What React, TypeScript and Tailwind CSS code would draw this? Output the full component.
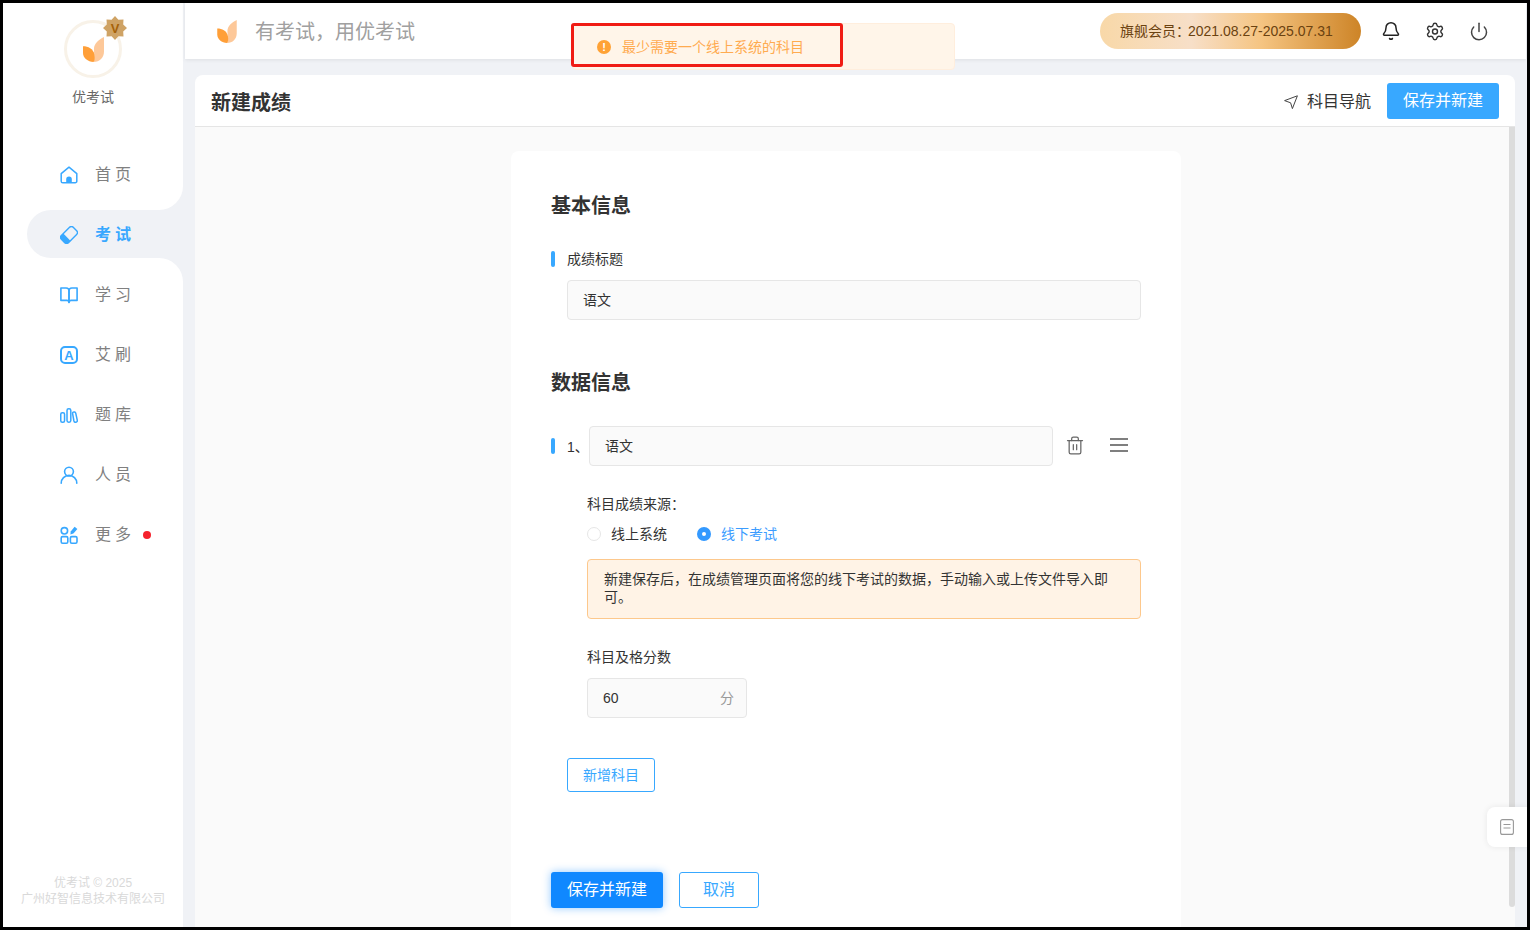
import React from "react";
import { Bell, Settings, Power, Trash2 } from "lucide-react";

function Logo({ className }: { className: string }) {
  return (
    <svg viewBox="0 0 22 26" className={className}>
      <path d="M22 0V15C22 21.5 17.5 26 11 26C13 22 11.5 18 11.5 12.5C11.5 7 16.5 2.5 22 0Z" fill="#fdc899" />
      <path d="M0 9.5C5.5 9.5 10.5 12 12 18C12.7 22 12.3 25 11 26C5 26 0 22 0 16.5Z" fill="#ff9f38" />
    </svg>
  );
}

function HomeIcon() {
  return (
    <svg viewBox="0 0 18 18" className="w-[18px] h-[18px]" fill="none" stroke="#38a8ff" strokeWidth="1.5">
      <path d="M1.2 7.6L9 1.2l7.8 6.4v7.6a1.6 1.6 0 0 1-1.6 1.6H2.8a1.6 1.6 0 0 1-1.6-1.6z" strokeLinejoin="round" />
      <path d="M6.2 16.8v-3.4a2.8 2.8 0 0 1 5.6 0v3.4z" fill="#38a8ff" stroke="none" />
    </svg>
  );
}
function EraserIcon() {
  return (
    <svg viewBox="0 0 18 18" className="w-[18px] h-[18px]" fill="none" stroke="#38a8ff" strokeWidth="1.4">
      <g transform="rotate(-45 9 9)">
        <rect x="0.6" y="4" width="16.8" height="10" rx="2.6" />
        <path d="M3.2 4H6V14H3.2A2.6 2.6 0 0 1 0.6 11.4V6.6A2.6 2.6 0 0 1 3.2 4Z" fill="#38a8ff" stroke="none" />
      </g>
    </svg>
  );
}
function BookIcon() {
  return (
    <svg viewBox="0 0 18 18" className="w-[18px] h-[18px]" fill="none" stroke="#38a8ff" strokeWidth="1.6" strokeLinejoin="round">
      <path d="M0.9 2H6.2A2.8 2.8 0 0 1 9 4.8V16.4A2.2 2.2 0 0 0 6.8 14.4H0.9Z" />
      <path d="M17.1 2H11.8A2.8 2.8 0 0 0 9 4.8V16.4A2.2 2.2 0 0 1 11.2 14.4H17.1Z" />
    </svg>
  );
}
function ABadge() {
  return (
    <div className="w-[18px] h-[18px] rounded-[5px] border-2 border-[#38a8ff] flex items-center justify-center text-[#38a8ff] text-[13px] font-bold leading-none">A</div>
  );
}
function BarsIcon() {
  return (
    <svg viewBox="0 0 19 16" className="w-[19px] h-[17px]" fill="none" stroke="#38a8ff" strokeWidth="1.6">
      <rect x="0.8" y="5" width="4" height="10.2" rx="1.6" />
      <rect x="7.4" y="0.8" width="4" height="14.4" rx="1.8" />
      <path d="M14 4.5a1.7 1.7 0 0 1 2.6 1l1.6 7.4a1.8 1.8 0 0 1-3.5.9L13.3 6a1.7 1.7 0 0 1 .7-1.5z" />
    </svg>
  );
}
function UserIcon() {
  return (
    <svg viewBox="0 0 18 18" className="w-[18px] h-[18px]" fill="none" stroke="#38a8ff" strokeWidth="1.6" strokeLinecap="round">
      <circle cx="9" cy="5.6" r="4.4" />
      <path d="M1.2 17.2a7.8 7.8 0 0 1 15.6 0" />
    </svg>
  );
}
function MoreIcon() {
  return (
    <svg viewBox="0 0 18 18" className="w-[18px] h-[18px]" fill="none" stroke="#38a8ff" strokeWidth="1.6">
      <circle cx="4.4" cy="4.8" r="3.2" />
      <rect x="1.2" y="10.6" width="6.6" height="6.6" rx="1.4" />
      <rect x="10.4" y="10.6" width="6.6" height="6.6" rx="1.4" />
      <path d="M14.6 0.8l2.8 2.2-4 4.6-3 .8.3-3z" fill="#38a8ff" stroke="none" />
    </svg>
  );
}

function NavRow({ icon, label, extra }: { icon: React.ReactNode; label: string; extra?: React.ReactNode }) {
  return (
    <div className="h-[60px] pl-[57px] flex items-center">
      <div className="w-[18px] flex justify-center items-center">{icon}</div>
      <span className="ml-[17px] text-[16px] tracking-[4px] text-[#808080]">{label}</span>
      {extra}
    </div>
  );
}

function Sidebar() {
  return (
    <div className="w-[180px] shrink-0 flex flex-col bg-[#f0f2f6]">
      <div className="bg-white rounded-br-[24px] pb-[5px]">
        <div className="pt-[17px] flex flex-col items-center h-[142px]">
          <div className="relative w-[58px] h-[58px] rounded-full border-[3px] border-[#f8f2e8] flex items-center justify-center">
            <Logo className="w-[21px] h-[25px]" />
            <div className="absolute -right-[8px] -top-[7px] w-[24px] h-[24px] flex items-center justify-center">
              <svg viewBox="0 0 24 24" className="absolute inset-0 w-full h-full">
                <polygon points="12,0 15.4,3.8 20.5,3.5 20.2,8.6 24,12 20.2,15.4 20.5,20.5 15.4,20.2 12,24 8.6,20.2 3.5,20.5 3.8,15.4 0,12 3.8,8.6 3.5,3.5 8.6,3.8" fill="#cfa365" />
              </svg>
              <span className="relative text-[13px] font-bold leading-none text-[#a5620a]">V</span>
            </div>
          </div>
          <div className="mt-[9px] text-[14px] leading-[20px] text-[#666666]">优考试</div>
        </div>
        <NavRow icon={<HomeIcon />} label="首页" />
      </div>
      <div className="bg-white h-[48px] pl-[24px]">
        <div className="h-full bg-[#f0f2f6] rounded-l-[24px] pl-[33px] pt-[2px] flex items-center">
          <div className="w-[18px] flex justify-center"><EraserIcon /></div>
          <span className="ml-[17px] text-[16px] tracking-[4px] font-bold text-[#38a8ff]">考试</span>
        </div>
      </div>
      <div className="flex-1 bg-white rounded-tr-[24px] pt-[7px] flex flex-col">
        <NavRow icon={<BookIcon />} label="学习" />
        <NavRow icon={<ABadge />} label="艾刷" />
        <NavRow icon={<BarsIcon />} label="题库" />
        <NavRow icon={<UserIcon />} label="人员" />
        <NavRow icon={<MoreIcon />} label="更多" extra={<span className="ml-[8px] w-[8px] h-[8px] rounded-full bg-[#f5222d]" />} />
        <div className="mt-auto pb-[20px] text-center text-[12px] leading-[16px] text-[#d9d9d9]">
          <div>优考试 © 2025</div>
          <div>广州好智信息技术有限公司</div>
        </div>
      </div>
    </div>
  );
}

function TopBar() {
  return (
    <div className="h-[56px] shrink-0 ml-[2px] mr-[1px] bg-white shadow-[0_1px_4px_rgba(0,0,0,0.08)] flex items-center pl-[32px] pr-[37px] relative">
      <Logo className="w-[20px] h-[23px] mt-[1px]" />
      <span className="ml-[18px] mt-[2px] text-[20px] text-[#a0a0a0]">有考试，用优考试</span>
      <div className="ml-auto w-[261px] h-[36px] rounded-full pl-[20px] flex items-center text-[14px] text-[#6b4210] bg-[linear-gradient(90deg,#f8d8a8_0%,#f7dfc8_35%,#f5c481_62%,#cd8427_100%)]">
        <span>旗舰会员：</span>
        <span className="-ml-[2px]">2021.08.27-2025.07.31</span>
      </div>
      <div className="ml-[20px] w-[20px] flex justify-center"><Bell size={20} color="#222222" strokeWidth={1.8} /></div>
      <div className="ml-[24px] w-[20px] flex justify-center"><Settings size={21} color="#333333" strokeWidth={1.7} /></div>
      <div className="ml-[24px] w-[20px] flex justify-center"><Power size={21} color="#444444" strokeWidth={1.8} /></div>
    </div>
  );
}

function Bar() {
  return <span className="w-[4px] h-[16px] rounded-[2px] bg-[#38a8ff] shrink-0" />;
}

function TextBox({ value, className, suffix }: { value: string; className: string; suffix?: string }) {
  return (
    <div className={`h-[40px] px-[15px] flex items-center justify-between rounded-[4px] border border-[#e6e6e6] bg-[#fafafa] text-[14px] text-[#333333] ${className}`}>
      <span>{value}</span>
      {suffix ? <span className="text-[#999999] -mr-[3px]">{suffix}</span> : null}
    </div>
  );
}

function Form() {
  return (
    <div className="w-[670px] rounded-t-[8px] bg-white px-[40px] pt-[40px] pb-[40px] text-[#333333]">
      <div className="h-[28px] leading-[30px] text-[20px] font-bold">基本信息</div>
      <div className="mt-[30px] h-[20px] flex items-center">
        <Bar />
        <span className="ml-[12px] text-[14px]">成绩标题</span>
      </div>
      <TextBox value="语文" className="mt-[11px] ml-[16px] w-[574px]" />
      <div className="mt-[48px] h-[28px] leading-[30px] text-[20px] font-bold">数据信息</div>
      <div className="mt-[30px] h-[40px] flex items-center">
        <Bar />
        <span className="ml-[12px] w-[22px] text-[14px] pt-[3px]">1、</span>
        <TextBox value="语文" className="w-[464px]" />
        <div className="ml-[12px] w-[20px] flex justify-center -mt-[2px]"><Trash2 size={21} color="#666666" strokeWidth={1.5} /></div>
        <svg viewBox="0 0 18 14" className="ml-[25px] w-[18px] h-[14px] -mt-[2px]" stroke="#555555" strokeWidth="1.6">
          <path d="M0 1h18M0 7h18M0 13h18" />
        </svg>
      </div>
      <div className="ml-[36px]">
        <div className="mt-[28px] h-[20px] leading-[20px] text-[14px]">科目成绩来源：</div>
        <div className="mt-[10px] h-[20px] flex items-center text-[14px]">
          <span className="w-[14px] h-[14px] rounded-full border border-[#e6e6e6] bg-white" />
          <span className="ml-[10px]">线上系统</span>
          <span className="ml-[30px] w-[14px] h-[14px] rounded-full bg-[#3399ff] flex items-center justify-center">
            <span className="w-[4px] h-[4px] rounded-full bg-white" />
          </span>
          <span className="ml-[10px] text-[#3b9cff]">线下考试</span>
        </div>
        <div className="mt-[15px] w-[554px] h-[60px] rounded-[4px] border border-[#fdc88c] bg-[#fff3e6] px-[16px] pt-[10px] text-[14px] leading-[18px]">
          新建保存后，在成绩管理页面将您的线下考试的数据，手动输入或上传文件导入即可。
        </div>
        <div className="mt-[28px] h-[20px] leading-[20px] text-[14px]">科目及格分数</div>
        <TextBox value="60" suffix="分" className="mt-[11px] w-[160px]" />
      </div>
      <div className="mt-[40px] ml-[16px] w-[88px] h-[34px] rounded-[3px] border border-[#38a8ff] bg-white flex items-center justify-center text-[14px] text-[#38a8ff]">新增科目</div>
      <div className="mt-[80px] flex gap-[16px]">
        <div className="w-[112px] h-[36px] rounded-[3px] bg-[#1088ff] text-white text-[16px] flex items-center justify-center shadow-[0_0_8px_rgba(16,136,255,0.45)]">保存并新建</div>
        <div className="w-[80px] h-[36px] rounded-[3px] border border-[#38a8ff] bg-white text-[#38a8ff] text-[16px] flex items-center justify-center">取消</div>
      </div>
    </div>
  );
}

function Card() {
  return (
    <div className="flex-1 min-h-0 mt-[16px] mx-[12px] rounded-t-[8px] overflow-hidden bg-white flex flex-col">
      <div className="h-[52px] shrink-0 border-b border-[#e5e5e5] pl-[16px] pr-[16px] flex items-center">
        <span className="text-[20px] font-bold text-[#333333] mt-[4px]">新建成绩</span>
        <svg viewBox="0 0 14 14" className="ml-auto mt-[2px] w-[14px] h-[14px]" fill="none" stroke="#444444" strokeWidth="1" strokeLinejoin="round">
          <path d="M13.4 0.8L0.6 5.6l6 2.2 1.8 5.8z" />
        </svg>
        <span className="ml-[9px] mt-[2px] text-[16px] text-[#333333]">科目导航</span>
        <div className="ml-[16px] w-[112px] h-[36px] rounded-[3px] bg-[#38a8ff] text-white text-[16px] flex items-center justify-center">保存并新建</div>
      </div>
      <div className="flex-1 min-h-0 bg-[#fafafa] flex">
        <div className="flex-1 min-w-0 h-full overflow-hidden pt-[24px] pl-[316px]">
          <Form />
        </div>
        <div className="w-[6px] h-[780px] rounded-b-[3px] bg-[#dcdcdc] shrink-0" />
      </div>
    </div>
  );
}

export default function App() {
  return (
    <div className="relative w-[1530px] h-[930px] border-[3px] border-black bg-[#f0f2f6] overflow-hidden flex font-['Liberation_Sans','Noto_Sans_CJK_SC',sans-serif]">
      <Sidebar />
      <div className="flex-1 min-w-0 flex flex-col">
        <TopBar />
        <Card />
      </div>
      <div className="absolute left-[569px] top-[20px] w-[383px] h-[47px] rounded-[4px] border border-[#ffeedd] bg-[#fff5e9] flex items-center pl-[24px]">
        <span className="w-[14px] h-[14px] rounded-full bg-[#ffa235] text-white text-[11px] font-bold leading-[14px] text-center">!</span>
        <span className="ml-[11px] mt-[2px] text-[14px] text-[#ffab50]">最少需要一个线上系统的科目</span>
      </div>
      <div className="absolute left-[568px] top-[20px] w-[272px] h-[44px] rounded-[3px] border-[3px] border-[#f01c14]" />
      <div className="absolute right-0 top-[804px] w-[40px] h-[40px] rounded-l-[8px] bg-white shadow-[0_0_6px_rgba(0,0,0,0.08)] flex items-center justify-center">
        <svg viewBox="0 0 14 16" className="w-[14px] h-[16px]" fill="none" stroke="#999999" strokeWidth="1.1">
          <rect x="0.6" y="0.6" width="12.8" height="14.8" rx="2" />
          <path d="M3.5 5.5h7M3.5 9h7" />
        </svg>
      </div>
    </div>
  );
}
